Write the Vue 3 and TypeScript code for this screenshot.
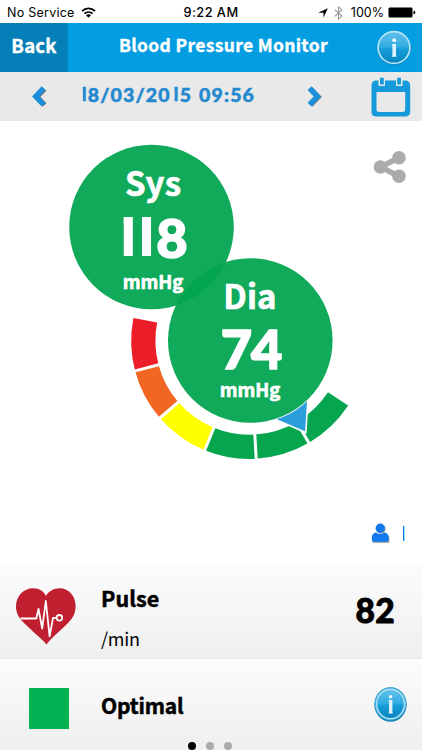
<script setup lang="ts">
import { computed } from 'vue'

interface Segment {
  from: number
  to: number
  color: string
}

const systolic = '118'
const diastolic = '74'
const dateChars = '18/03/2015 09:56'.split('')

const segments: Segment[] = [
  { from: 165.2, to: 191.1, color: '#ed1c29' },
  { from: 139.2, to: 165.2, color: '#f16623' },
  { from: 112.2, to: 139.2, color: '#ffff00' },
  { from: 86.7, to: 112.2, color: '#06a64f' },
  { from: 59.8, to: 86.7, color: '#06a64f' },
  { from: 33.3, to: 59.8, color: '#06a64f' },
]

const cx = 249.4
const cy = 219.7
const outer = 118.2
const inner = 94

function point(radius: number, degrees: number): string {
  const a = (degrees * Math.PI) / 180
  return `${(cx + radius * Math.cos(a)).toFixed(2)} ${(cy + radius * Math.sin(a)).toFixed(2)}`
}

const arcs = computed(() =>
  segments.map((s) => ({
    color: s.color,
    d: `M${point(outer, s.from)}A${outer} ${outer} 0 0 1 ${point(outer, s.to)}L${point(inner, s.to)}A${inner} ${inner} 0 0 0 ${point(inner, s.from)}Z`,
  })),
)

const dividers = segments.slice(0, 5).map((s) => `M${point(92, s.from)}L${point(121, s.from)}`)
</script>

<template>
  <div class="screen">
    <div class="status">
      <div class="carrier">
        <span>No Service</span>
        <svg width="15" height="11" viewBox="0 0 15 11" fill="none" stroke="#000" stroke-width="1.7">
          <path d="M1 4.2C4.8.5 10.2.5 14 4.2M3.4 6.7C5.8 4.4 9.2 4.4 11.6 6.7" />
          <path d="M7.5 10.8L5 8.3C6.4 7 8.6 7 10 8.3Z" fill="#000" stroke="none" />
        </svg>
      </div>
      <span class="clock">9:22 AM</span>
      <div class="power">
        <svg class="locate" width="10" height="10" viewBox="0 0 10 10"><path d="M9.8.2L5.5 9.8V4.7H.2Z" /></svg>
        <svg class="bluetooth" width="9" height="14" viewBox="0 0 9 14" fill="none" stroke="#999" stroke-width="1.1">
          <path d="M.7 3.7L8 10.1L4.5 13.1V.9L8 3.9L.7 10.3" />
        </svg>
        <span class="percent">100%</span>
        <svg width="28" height="11" viewBox="0 0 28 11">
          <rect x=".5" y=".5" width="24" height="10" rx="1.6" stroke="#777" stroke-width=".6" />
          <path d="M25.5 3.5Q27.4 4 27.4 5.5T25.5 7.5Z" />
        </svg>
      </div>
    </div>

    <header class="header">
      <div class="back"><span class="back-label">Back</span></div>
      <div class="title"><span class="title-label">Blood Pressure Monitor</span></div>
      <svg class="info" width="36" height="36" viewBox="0 0 36 36">
        <defs>
          <linearGradient id="gloss" x1="0" y1="0" x2="0" y2="1">
            <stop offset="0" stop-color="#62c2eb" />
            <stop offset=".48" stop-color="#31ace2" />
            <stop offset=".54" stop-color="#179dd9" />
            <stop offset="1" stop-color="#0784bf" />
          </linearGradient>
        </defs>
        <circle cx="18" cy="18.5" r="17" fill="#087eb6" opacity=".5" />
        <circle cx="18" cy="17.5" r="15.9" fill="url(#gloss)" stroke="#b9e4f6" stroke-width="1.7" />
        <circle cx="18.2" cy="10.2" r="2" fill="#eaf7fd" />
        <path d="M16 14H20V25.5H20.6V26.8H15.8V25.5H16.4V15.3H16Z" fill="#dff3fc" />
      </svg>
    </header>

    <nav class="dates">
      <svg class="prev" width="16" height="22" viewBox="0 0 16 22" fill="none" stroke-width="5.4">
        <path d="M13.5 3L5.8 11L13.5 19" stroke="#777" />
        <path d="M12.6 2.2L4.8 10.4L12.6 18.6" stroke="#1b8fdb" />
      </svg>
      <div class="date">
        <span v-for="(c, i) in dateChars" :key="i" :class="{ one: c === '1', gap: c === ' ' }">{{ c }}</span>
      </div>
      <svg class="next" width="16" height="22" viewBox="0 0 16 22" fill="none" stroke-width="5.4">
        <path d="M3.4 3L11.1 11L3.4 19" stroke="#777" />
        <path d="M2.6 2.2L10.4 10.4L2.6 18.6" stroke="#1b8fdb" />
      </svg>
      <svg class="calendar" width="40" height="40" viewBox="0 0 40 40">
        <path
          fill="#159bdc"
          fill-rule="evenodd"
          d="M5 3.5H7.5V9H14V3.5H25V9H31.5V3.5H34Q39.2 3.5 39.2 9V34.5Q39.2 39.5 34 39.5H5Q.5 39.5 .5 34.5V9Q.5 3.5 5 3.5ZM5.5 15V32.5Q5.5 35 8 35H31.5Q34.2 35 34.2 32.5V15Z"
        />
        <path fill="#159bdc" d="M9 .7H12.8V7.5H9ZM26.2 .7H30V7.5H26.2Z" />
      </svg>
    </nav>

    <main class="gauge">
      <svg class="scale" width="422" height="444" viewBox="0 0 422 444">
        <path v-for="(a, i) in arcs" :key="i" :d="a.d" :fill="a.color" />
        <path v-for="(d, i) in dividers" :key="'d' + i" :d="d" stroke="#fff" stroke-width="3" />
        <path d="M272 297L308 278L305.8 311.5Z" fill="#2b9fdc" stroke="#fff" stroke-width="1.6" />
        <circle cx="250.3" cy="219.5" r="83.2" fill="#fff" />
        <circle cx="151.5" cy="106" r="82.3" fill="#02a551" fill-opacity=".94" />
        <circle cx="250.3" cy="219.5" r="82.3" fill="#02a551" fill-opacity=".94" />
        <g fill="#ababab" stroke="#ababab">
          <path d="M398 37L381 46L398 55" fill="none" stroke-width="5.5" />
          <circle cx="380.3" cy="46" r="6.7" stroke="none" />
          <circle cx="399" cy="36.8" r="6.8" stroke="none" />
          <circle cx="399" cy="55.3" r="6.8" stroke="none" />
        </g>
      </svg>
      <section class="dial systolic">
        <span class="name">Sys</span>
        <div class="value">
          <span v-for="(c, i) in systolic" :key="i" :class="{ one: c === '1' }">{{ c }}</span>
        </div>
        <span class="unit">mmHg</span>
      </section>
      <section class="dial diastolic">
        <span class="name">Dia</span>
        <div class="value"><span v-for="(c, i) in diastolic" :key="i">{{ c }}</span></div>
        <span class="unit">mmHg</span>
      </section>
      <div class="user">
        <svg width="20" height="21" viewBox="0 0 20 21">
          <g fill="#aaa" transform="translate(.7 .9)">
            <circle cx="9.3" cy="5.2" r="4.7" />
            <path d="M1 19V15Q1 10.5 5.5 10Q9.3 13 13 10Q17.7 10.5 17.7 15V19Z" />
          </g>
          <g fill="#1279ee">
            <circle cx="9.3" cy="5.2" r="4.7" />
            <path d="M.8 17V14.5Q1 10.3 5 9.5Q9.3 12.5 13.5 9.5Q17.7 10.3 17.7 14.5V17Q17.7 18.7 16 18.7H2.5Q.8 18.7 .8 17Z" />
          </g>
        </svg>
        <span class="user-number"><span class="one">1</span></span>
      </div>
    </main>

    <section class="row pulse">
      <svg class="heart" width="60" height="57" viewBox="0 0 60 57">
        <path
          fill="#c01f2f"
          d="M30.5 56.5C27 52 16 43 8 35C2.5 29.5 0 24.5 0 18.5C0 8 7.5 .2 17 .2C23.5 .2 28 3.5 30 8C32.5 3.3 37.5 .2 43.5 .2C53 .2 59.6 8 59.6 18C59.6 25 57 30 52 35C44 43 34.5 50.5 30.5 56.5Z"
        />
        <g fill="none" stroke="#fff" stroke-width="1.8" stroke-linejoin="round">
          <path d="M4.5 30.5H20.3L22.5 21L26.2 40.5L29.8 13L33.6 48.3L37 29.8H40.2" />
          <circle cx="43.4" cy="29.8" r="2.8" />
        </g>
      </svg>
      <div class="labels">
        <span class="label">Pulse</span>
        <span class="per">/min</span>
      </div>
      <span class="rate">82</span>
    </section>

    <section class="row rating">
      <div class="swatch"></div>
      <span class="label optimal">Optimal</span>
      <svg class="info" width="33" height="35" viewBox="0 0 33 35">
        <ellipse cx="16.5" cy="17.5" rx="16.2" ry="17.2" fill="#1581b4" />
        <ellipse cx="16.5" cy="16.8" rx="15.7" ry="16.4" fill="#48b4df" />
        <ellipse cx="16.5" cy="17" rx="13.9" ry="14.6" fill="url(#gloss)" stroke="#b9e4f6" stroke-width="1.3" />
        <circle cx="16.6" cy="9.7" r="1.8" fill="#eaf7fd" />
        <path d="M14.8 13H18.4V25.2H18.7V26.4H14.6V25.2H15V14.2H14.8Z" fill="#dff3fc" />
      </svg>
      <div class="pager"><i class="on"></i><i></i><i></i></div>
    </section>
  </div>
</template>

<style>
body {
  background: #fff;
}
</style>

<style scoped>
.screen {
  width: 422px;
  height: 750px;
  display: flex;
  flex-direction: column;
  overflow: hidden;
  background: #fff;
  color: #000;
  font-family: 'Noto Sans CJK JP', 'Noto Sans', sans-serif;
  white-space: nowrap;
}
svg {
  display: block;
  flex: none;
}
.one {
  display: inline-block;
  font-family: Inter, sans-serif;
  clip-path: inset(0 0 0 0.215em);
  margin-left: -0.16em;
}
.status {
  height: 23px;
  flex: none;
  display: grid;
  grid-template-columns: 1fr auto 1fr;
  align-items: center;
  font: 12.5px/23px Inter, sans-serif;
  letter-spacing: 0.25px;
}
.carrier {
  display: flex;
  align-items: center;
  gap: 6px;
  padding-left: 7px;
  padding-top: 1px;
}
.clock {
  font-weight: 500;
  font-size: 12.8px;
  letter-spacing: 0.45px;
  padding-top: 1px;
}
.power {
  display: flex;
  align-items: center;
  justify-content: flex-end;
  padding-right: 6px;
  padding-top: 1px;
}
.bluetooth {
  margin: 0 8px 0 6px;
}
.percent {
  margin-right: 4px;
  letter-spacing: 0;
}
.header {
  height: 49px;
  flex: none;
  display: flex;
  align-items: center;
  background: #039de2;
  color: #fff;
  font-size: 17.5px;
  font-weight: 700;
  line-height: 44px;
  -webkit-text-stroke: 0.35px #fff;
}
.header svg {
  -webkit-text-stroke: 0;
}
.back {
  width: 68px;
  height: 49px;
  background: #057fb7;
  text-align: center;
}
.back-label {
  font-size: 18.5px;
  letter-spacing: 0.2px;
}
.title {
  flex: 1;
  height: 49px;
  padding-left: 51px;
  letter-spacing: 0.32px;
}
.header .info {
  margin-right: 10px;
}
.dates {
  height: 49px;
  flex: none;
  display: flex;
  align-items: center;
  background: #e9e9e9;
}
.prev {
  margin-left: 31px;
}
.date {
  width: 175px;
  margin-left: 34px;
  display: flex;
  font: 900 19.5px/42px Lato, sans-serif;
  height: 46px;
  color: #2589cf;
  letter-spacing: 1.1px;
  -webkit-text-stroke: 0.5px #2589cf;
}
.date .one {
  font: 700 18.5px/41px Inter, sans-serif;
  margin-left: -0.12em;
}
.date .one:not(:first-child) {
  margin-left: 0;
}
.date .gap {
  width: 7px;
}
.next {
  margin-left: 51px;
}
.calendar {
  margin-left: 48px;
}
.gauge {
  position: relative;
  height: 444px;
  flex: none;
}
.dial {
  position: absolute;
  width: 164px;
  height: 164px;
  display: flex;
  flex-direction: column;
  align-items: center;
  color: #fff;
  font-weight: 700;
  -webkit-text-stroke: 0.6px #fff;
}
.systolic {
  left: 71px;
  top: 24px;
}
.diastolic {
  left: 168px;
  top: 137px;
}
.name {
  font-size: 33px;
  line-height: 40px;
  padding-top: 17px;
  letter-spacing: 0.1px;
}
.value {
  display: flex;
  font: 900 54px/56px Lato, sans-serif;
  padding-top: 8px;
  padding-bottom: 1px;
  -webkit-text-stroke: 1.6px #fff;
}
.diastolic .value {
  padding: 6px 0 0 2px;
  letter-spacing: -1px;
}
.systolic .value .one {
  font: 800 54px/54px Inter, sans-serif;
  -webkit-text-stroke: 0;
  margin-left: -0.12em;
  margin-right: 1px;
}
.systolic .value span:last-child {
  padding-left: 1px;
}
.unit {
  font-size: 18.5px;
  line-height: 28px;
  letter-spacing: 0;
}
.diastolic .unit {
  line-height: 25px;
}
.user {
  position: absolute;
  left: 371px;
  top: 402px;
  display: flex;
  align-items: center;
  gap: 10px;
  color: #1279ee;
}
.user-number {
  font-size: 20px;
  line-height: 20px;
}
.user-number .one {
  clip-path: inset(0 0 0 0.26em);
}
.row {
  flex: none;
  display: flex;
  box-sizing: border-box;
  background: linear-gradient(#fcfcfc, #efefef);
}
.pulse {
  height: 94px;
  border-bottom: 1px solid #e8e8e8;
  padding: 23px 27px 0 16px;
}
.labels {
  display: flex;
  flex-direction: column;
  flex: 1;
  padding-left: 25px;
}
.label {
  font-size: 21.5px;
  font-weight: 700;
  line-height: 20px;
  letter-spacing: 0.1px;
  -webkit-text-stroke: 0.5px #000;
}
.per {
  font-size: 18px;
  line-height: 24px;
  padding-top: 18px;
  letter-spacing: -0.2px;
}
.rate {
  font: 900 33.5px/44px Lato, sans-serif;
  letter-spacing: 0.3px;
  -webkit-text-stroke: 0.9px #000;
}
.rating {
  height: 91px;
  position: relative;
  padding: 29px 15px 0 29px;
}
.swatch {
  width: 40px;
  height: 41px;
  background: #02b152;
}
.optimal {
  flex: 1;
  padding: 7px 0 0 32px;
  font-size: 21px;
  letter-spacing: -0.15px;
}
.rating .info {
  margin-top: -1px;
}
.pager {
  position: absolute;
  left: 188px;
  top: 83px;
  display: flex;
  gap: 10px;
}
.pager i {
  width: 8px;
  height: 8px;
  border-radius: 50%;
  background: #aaa;
}
.pager .on {
  background: #000;
}
</style>
